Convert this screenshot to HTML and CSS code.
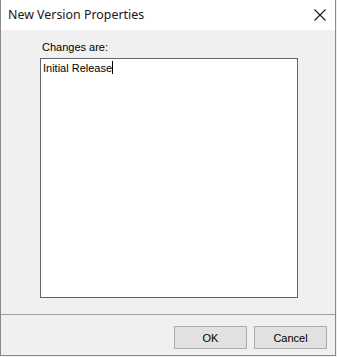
FILE: index.html
```html
<!DOCTYPE html>
<html lang="en">
<head>
  <meta charset="UTF-8">
  <title>New Version Properties</title>
  <link rel="stylesheet" href="styles.css">
</head>
<body>
  <div class="dialog">
    <div class="titlebar">
      <span class="title">New Version Properties</span>
      <svg class="close" width="12" height="12" viewBox="0 0 12 12">
        <path d="M0.5 0.5 L11.5 11.5 M11.5 0.5 L0.5 11.5" stroke="#1a1a1a" stroke-width="1.1" fill="none"/>
      </svg>
    </div>
    <div class="content">
      <div class="label">Changes are:</div>
      <div class="memo"><span>Initial Release</span><span class="caret"></span></div>
    </div>
    <div class="buttons">
      <div class="btn">OK</div>
      <div class="btn">Cancel</div>
    </div>
  </div>
</body>
</html>
```

FILE: styles.css
```css
body {
  margin: 0;
  background: #f0f0f0;
  font-family: "Liberation Sans", Arial, sans-serif;
}
.dialog {
  width: 334px;
  height: 355px;
  border: 1px solid #8a8a8a;
  border-top: none;
  background: #f0f0f0;
  display: flex;
  flex-direction: column;
}
.titlebar {
  height: 30px;
  flex-shrink: 0;
  background: #fff;
  display: flex;
  align-items: center;
  justify-content: space-between;
  padding: 0 9px 0 7px;
}
.title {
  font-size: 12.4px;
  color: #1b1320;
  font-family: "Noto Sans", "Liberation Sans", sans-serif;
  margin-top: -1px;
}
.close {
  margin-top: -1px;
}
.content {
  padding: 11px 0 0 39px;
  height: 285px;
  flex-shrink: 0;
  border-bottom: 1px solid #a0a0a0;
  box-sizing: border-box;
  margin-bottom: 1px;
}
.label {
  font-size: 11px;
  color: #000;
  padding-left: 2px;
  height: 17px;
}
.memo {
  width: 252px;
  height: 232px;
  border: 1px solid #646464;
  background: #fff;
  font-size: 11px;
  padding: 3px 2px;
  display: flex;
  align-items: flex-start;
}
.caret {
  display: inline-block;
  width: 1px;
  height: 13px;
  background: #000;
  margin-top: -1px;
}
.buttons {
  display: flex;
  justify-content: flex-end;
  gap: 7px;
  padding: 10px 8px 0 0;
}
.btn {
  width: 71px;
  height: 21px;
  background: #e1e1e1;
  border: 1px solid #adadad;
  font-size: 11px;
  display: flex;
  align-items: center;
  justify-content: center;
  color: #000;
}
```
